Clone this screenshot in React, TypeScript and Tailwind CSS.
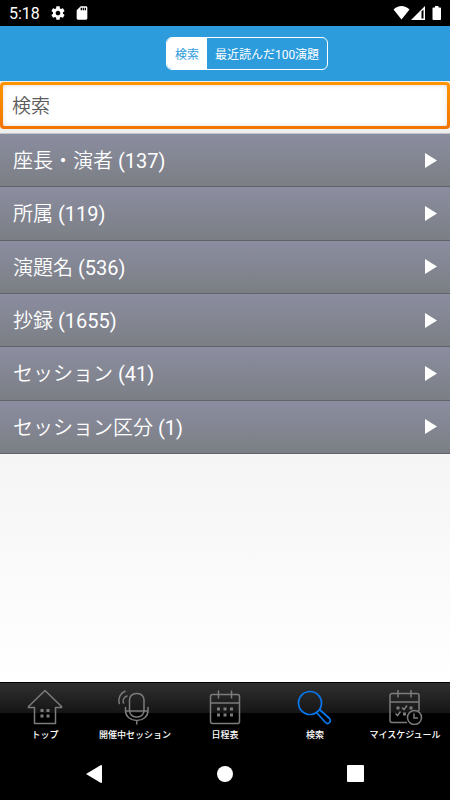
import React from "react";

const rows: { label: string; count: number }[] = [
  { label: "座長・演者", count: 137 },
  { label: "所属", count: 119 },
  { label: "演題名", count: 536 },
  { label: "抄録", count: 1655 },
  { label: "セッション", count: 41 },
  { label: "セッション区分", count: 1 },
];

function StatusBar() {
  return (
    <div className="flex h-[26px] shrink-0 items-center bg-black pl-[9px] pr-2 text-white">
      <span className="pt-0.5 text-base leading-6">5:18</span>
      <svg className="ml-[10px] size-4" viewBox="0 0 24 24" fill="currentColor" aria-hidden="true">
        <path d="M19.43 12.98c.04-.32.07-.64.07-.98s-.03-.66-.07-.98l2.11-1.65c.19-.15.24-.42.12-.64l-2-3.46c-.12-.22-.39-.3-.61-.22l-2.49 1c-.52-.4-1.08-.73-1.69-.98l-.38-2.65C14.46 2.18 14.25 2 14 2h-4c-.25 0-.46.18-.49.42l-.38 2.65c-.61.25-1.17.59-1.69.98l-2.49-1c-.23-.09-.49 0-.61.22l-2 3.46c-.13.22-.07.49.12.64l2.11 1.65c-.04.32-.07.65-.07.98s.03.66.07.98l-2.11 1.65c-.19.15-.24.42-.12.64l2 3.46c.12.22.39.3.61.22l2.49-1c.52.4 1.08.73 1.69.98l.38 2.65c.03.24.24.42.49.42h4c.25 0 .46-.18.49-.42l.38-2.65c.61-.25 1.17-.59 1.69-.98l2.49 1c.23.09.49 0 .61-.22l2-3.46c.12-.22.07-.49-.12-.64l-2.11-1.65zM12 15.5c-1.93 0-3.5-1.57-3.5-3.5s1.57-3.5 3.5-3.5 3.5 1.57 3.5 3.5-1.57 3.5-3.5 3.5z" />
      </svg>
      <svg className="ml-2 size-4" viewBox="0 0 24 24" fill="currentColor" aria-hidden="true">
        <path d="M18 2h-8L4.020 8 4 20c0 1.100.9 2 2 2h12c1.100 0 2-.9 2-2V4c0-1.100-.9-2-2-2zm-6 6h-2V4h2v4zm3 0h-2V4h2v4zm3 0h-2V4h2v4z" />
      </svg>
      <div className="ml-auto flex items-center gap-px">
        <svg className="h-4 w-[17px]" viewBox="0 0 17 16" fill="currentColor" aria-hidden="true">
          <path d="M.5 4.500C5-.2 12-.2 16.500 4.500L8.500 14.500Z" />
        </svg>
        <svg className="size-4" viewBox="0 0 16 16" aria-hidden="true">
          <path d="M0 15 14 1v14Z" fill="#fff" />
          <path d="M10.500 6.500 12.500 4.500V13.500H10.500Z" fill="#000" />
        </svg>
        <svg className="ml-1 h-4 w-[10px]" viewBox="0 0 10 16" fill="currentColor" aria-hidden="true">
          <path d="M3 1h3.500v1.500H8c.6 0 1 .4 1 1V14c0 .6-.4 1-1 1H1.500c-.6 0-1-.4-1-1V3.500c0-.6.4-1 1-1H3Z" />
        </svg>
      </div>
    </div>
  );
}

function HouseIcon() {
  return (
    <svg className="size-9" viewBox="0 0 36 36" fill="none" stroke="#7c7c7c" strokeWidth="1.500" strokeLinejoin="round" aria-hidden="true">
      <path d="M18 1.500 1.500 17.500V18.500H7.500V34.500H28.500V18.500H34.500V17.500Z" />
      <g fill="#7c7c7c" stroke="none">
        <path d="M13.500 20h3v3h-3zM19.500 20h3v3h-3zM13.500 25.500h3v3h-3zM19.500 25.500h3v3h-3z" />
      </g>
    </svg>
  );
}

function MicIcon() {
  return (
    <svg className="size-9" viewBox="0 0 36 36" fill="none" stroke="#7c7c7c" strokeWidth="1.500" strokeLinecap="round" aria-hidden="true">
      <rect x="12.500" y="4.500" width="14.500" height="23.500" rx="6.500" />
      <path d="M8.500 18.500v3.500a11.250 9.500 0 0 0 22.500 0v-3.500M8.500 22H31M19.750 32v3" />
      <path d="M2.300 14.500C.8 9 3.500 4 8 2.300M6.500 14C5.500 11 7 8 10 7" />
    </svg>
  );
}

function CalendarIcon() {
  return (
    <svg className="size-9" viewBox="0 0 36 36" fill="none" stroke="#7c7c7c" strokeWidth="1.500" aria-hidden="true">
      <rect x="3.500" y="5.500" width="29" height="29" rx="2" />
      <path d="M3.500 14H32.500M11.500 1.500V9.500M24.500 1.500V9.500" />
      <path fill="#7c7c7c" stroke="none" d="M10 18.500h3v3h-3zM16.500 18.500h3v3h-3zM23 18.500h3v3h-3zM10 24.500h3v3h-3zM16.500 24.500h3v3h-3zM23 24.500h3v3h-3z" />
    </svg>
  );
}

function SearchIcon() {
  return (
    <svg className="size-9" viewBox="0 0 36 36" fill="none" stroke="#0878ee" strokeWidth="1.700" strokeLinejoin="round" aria-hidden="true">
      <circle cx="13" cy="14" r="11.500" />
      <path d="m19.500 23.500 9 10a2.400 2.400 0 0 0 4-4l-10-9" />
    </svg>
  );
}

function ScheduleIcon() {
  return (
    <svg className="size-9" viewBox="0 0 36 36" fill="none" stroke="#7c7c7c" strokeWidth="1.500" aria-hidden="true">
      <path d="M20 33.500H5a2 2 0 0 1-2-2V6.500a2 2 0 0 1 2-2h25a2 2 0 0 1 2 2V22M3 13H32M11 1V8.500M24 1V8.500" />
      <path fill="#7c7c7c" stroke="none" d="M9.500 17.500h3v3h-3zM22.500 17.500h3v3h-3zM16 23.500h3v3h-3z" />
      <path d="m15 18.500 2 2 3-4M8.500 24.500l2 2 3-4" />
      <circle cx="27.500" cy="28.500" r="7" />
      <path d="M27 24.500v4.500H31" />
    </svg>
  );
}

const tabs: { label: string; Icon: () => React.JSX.Element }[] = [
  { label: "トップ", Icon: HouseIcon },
  { label: "開催中セッション", Icon: MicIcon },
  { label: "日程表", Icon: CalendarIcon },
  { label: "検索", Icon: SearchIcon },
  { label: "マイスケジュール", Icon: ScheduleIcon },
];

export default function App() {
  return (
    <div className="flex min-h-screen flex-col bg-black font-[Roboto,'Noto_Sans_CJK_JP',sans-serif]">
      <StatusBar />

      <header className="flex h-[55px] shrink-0 items-center justify-center bg-[#2c9cdd] pl-11">
        <div className="flex h-[33px] overflow-hidden rounded-md border border-white text-xs">
          <button type="button" className="bg-white px-2 pt-0.5 text-[#2c9cdd]">
            検索
          </button>
          <button type="button" className="px-2 pt-0.5 text-white">
            最近読んだ100演題
          </button>
        </div>
      </header>

      <main className="flex grow flex-col">
        <div className="bg-[#eeeeee] pb-1 pt-px">
          <div className="rounded-sm bg-linear-to-b from-[#ff9500] to-[#f27400] p-[3px]">
            <input
              type="text"
              aria-label="検索"
              placeholder="検索"
              className="block h-[41px] w-full rounded-xs bg-white px-[9px] pt-0.5 text-[19px] text-[#333333] shadow-[inset_0_0_5px_#dddddd] outline-none placeholder:font-[350] placeholder:text-[#5c5c5c] placeholder:opacity-100"
            />
          </div>
        </div>

        <ul className="grid min-h-[321px] auto-rows-fr border-t border-[#c4c4c8]">
          {rows.map((row) => (
            <li key={row.label} className="flex">
              <button
                type="button"
                className="flex w-full items-center justify-between border-b border-[#5f6268] bg-linear-to-b from-[#8b8da0] to-[#7b7f84] pl-[13px] pr-[13px] text-left text-xl text-white"
              >
                <span className="pt-0.5">
                  <span className="font-[350]">{row.label}</span> ({row.count})
                </span>
                <svg className="h-[15px] w-3" viewBox="0 0 12 15" fill="#fff" aria-hidden="true">
                  <path d="M0 0 12 7.500 0 15Z" />
                </svg>
              </button>
            </li>
          ))}
        </ul>

        <div className="grow bg-linear-to-b from-[#f5f5f5] to-white" />
      </main>

      <nav className="grid h-[65px] shrink-0 grid-cols-5 border-t border-black bg-[linear-gradient(#303030,#151515_30px,#000_30px)]">
        {tabs.map(({ label, Icon }) => (
          <a key={label} href="#" className="flex flex-col items-center pt-[6px] text-white">
            <Icon />
            <span className="mt-1 whitespace-nowrap text-[9px] font-medium leading-3">{label}</span>
          </a>
        ))}
      </nav>

      <div className="flex h-[53px] shrink-0 items-center justify-center bg-black">
        <button type="button" aria-label="戻る" className="flex w-[130px] justify-center pr-0.5">
          <svg className="h-[18px] w-4" viewBox="0 0 16 18" fill="#fff" aria-hidden="true">
            <path d="M0 9 15 0Q16 0 16 1V17Q16 18 15 18Z" />
          </svg>
        </button>
        <button type="button" aria-label="ホーム" className="flex w-[130px] justify-center">
          <span className="size-4 rounded-full bg-white" />
        </button>
        <button type="button" aria-label="最近使ったアプリ" className="flex w-[130px] justify-center">
          <span className="size-[17px] rounded-[1px] bg-white" />
        </button>
      </div>
    </div>
  );
}
